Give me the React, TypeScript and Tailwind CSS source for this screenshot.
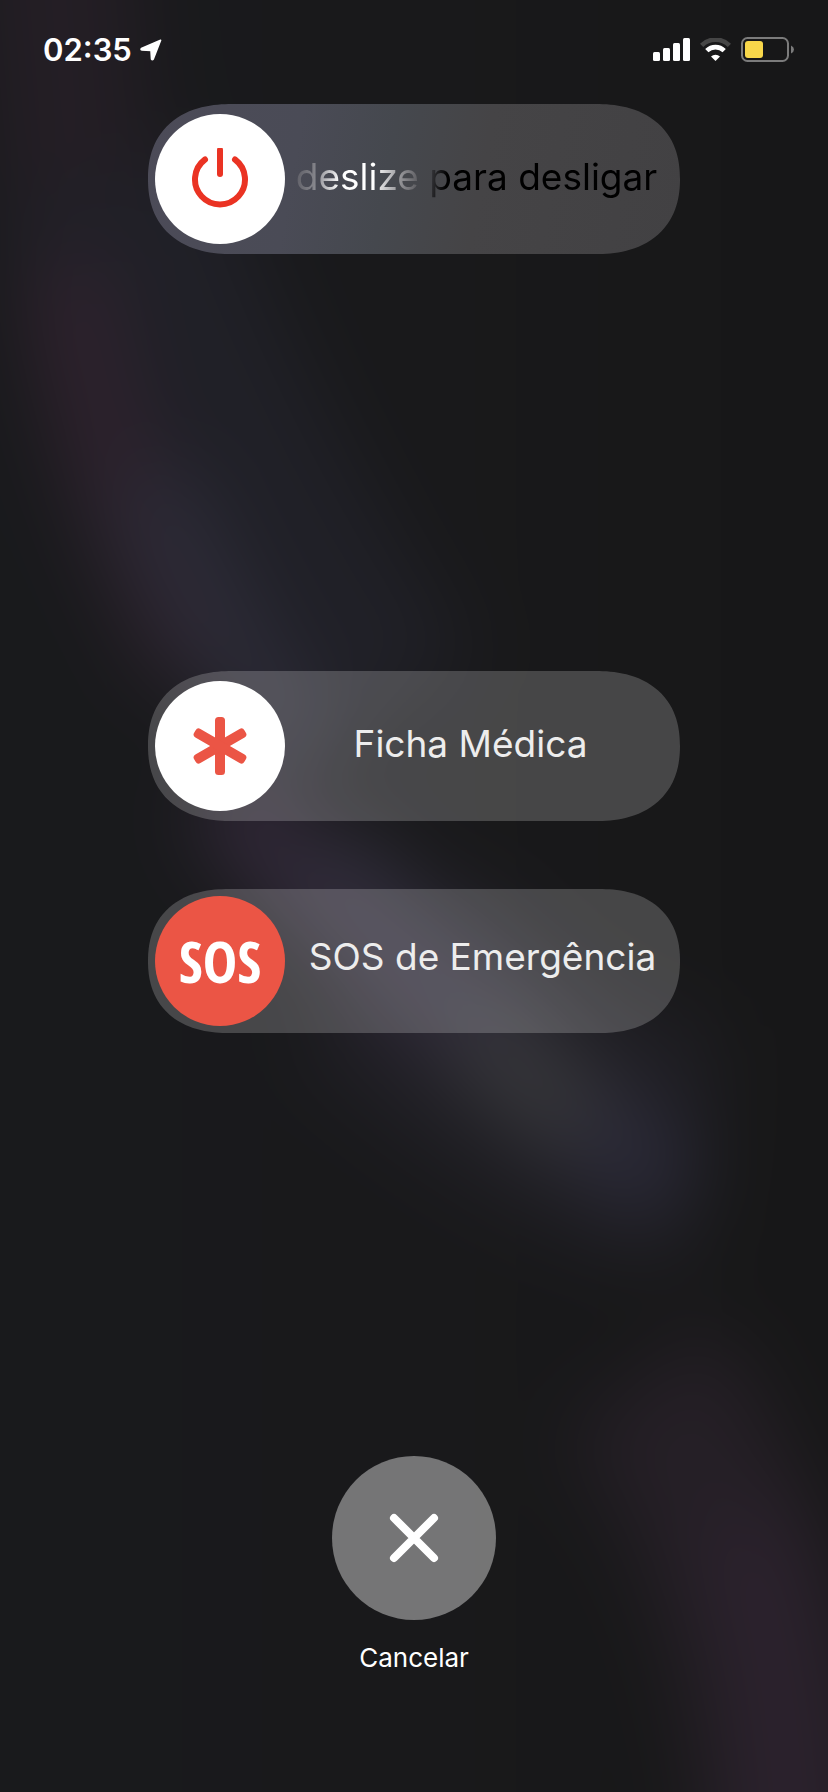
import React, { useId, useState } from 'react';
import clsx from 'clsx';

interface SlideControlProps {
  label: string;
  icon: React.ReactNode;
  trackClass: string;
  thumbClass: string;
  labelClass: string;
  textClass?: string;
}

function SlideControl({ label, icon, trackClass, thumbClass, labelClass, textClass }: SlideControlProps) {
  const id = useId();
  const [value, setValue] = useState(0);

  return (
    <div
      className={clsx(
        'relative w-full overflow-hidden rounded-full supports-[corner-shape:round]:rounded-[84px/75px] [corner-shape:superellipse(1.2)]',
        trackClass
      )}
    >
      <label
        htmlFor={id}
        className={clsx(
          'flex h-full items-center justify-center whitespace-nowrap pl-[137px] text-[37px] leading-[48px]',
          labelClass
        )}
      >
        <span className={clsx(textClass, value > 0 && 'opacity-30')}>{label}</span>
      </label>
      <input
        id={id}
        type="range"
        min={0}
        max={100}
        value={value}
        onChange={(e) => setValue(Number(e.target.value))}
        onPointerUp={() => setValue(0)}
        className={clsx(
          'absolute inset-0 m-0 h-full w-full cursor-pointer appearance-none bg-transparent px-[7px] outline-none [&::-webkit-slider-thumb]:size-[130px] [&::-webkit-slider-thumb]:appearance-none [&::-webkit-slider-thumb]:rounded-full',
          thumbClass
        )}
      />
      {/* Icon travels with the thumb */}
      <div
        className="pointer-events-none absolute inset-y-0 flex w-[130px] items-center justify-center"
        style={{ left: `calc(7px + (100% - 144px) * ${value / 100})` }}
      >
        {icon}
      </div>
    </div>
  );
}

function PowerIcon() {
  return (
    <svg width="58" height="62" viewBox="0 0 58 62" fill="none" stroke="#ea3323" strokeWidth="6" strokeLinecap="round">
      <path d="M29 2V26" />
      <path d="M14 11.5A25 25 0 1 0 44 11.5" />
    </svg>
  );
}

function MedicalIcon() {
  return (
    <svg width="60" height="60" viewBox="0 0 60 60" fill="#eb5545">
      <rect x="25" y="1" width="10" height="58" rx="3.5" />
      <rect x="25" y="1" width="10" height="58" rx="3.5" transform="rotate(60 30 30)" />
      <rect x="25" y="1" width="10" height="58" rx="3.5" transform="rotate(120 30 30)" />
    </svg>
  );
}

function StatusBar() {
  return (
    <header className="flex h-[104px] w-full items-start justify-between pl-[43px] pr-[34px] pt-[30px]">
      <div className="flex h-10 items-center gap-2 text-[31px] font-semibold leading-10 text-white">
        <time>02:35</time>
        <svg width="22" height="22" viewBox="0 0 22 22" fill="#fff" stroke="#fff" strokeWidth="1.6" strokeLinejoin="round">
          <path d="M20.6 1.2L1.4 9.6Q.6 10.4 1.6 10.9L11 11.4L11.5 20Q12.3 21.4 13.3 20Z" />
        </svg>
      </div>
      <div className="flex h-10 items-center gap-[10px]">
        <svg width="37" height="24" viewBox="0 0 37 24" fill="#fff">
          <rect x="0" y="14" width="7" height="9" rx="1.5" />
          <rect x="10" y="10" width="7" height="13" rx="1.5" />
          <rect x="20" y="5" width="7" height="18" rx="1.5" />
          <rect x="30" y="0" width="7" height="23" rx="1.5" />
        </svg>
        <svg width="31" height="24" viewBox="0 0 31 24" fill="none">
          <path d="M1.6 7.4A19.6 19.6 0 0 1 29.4 7.4" stroke="#464646" strokeWidth="4.6" />
          <path d="M6.8 12.7A12.3 12.3 0 0 1 24.2 12.7" stroke="#fff" strokeWidth="4.6" />
          <path d="M15.5 23L11 18.5A6.4 6.4 0 0 1 20 18.5Z" fill="#fff" />
        </svg>
        <svg width="53" height="26" viewBox="0 0 53 26" fill="none">
          <rect x="1" y="1" width="46" height="23" rx="5.5" stroke="#7b7b7b" strokeWidth="2" />
          <rect x="4" y="4" width="18" height="17" rx="3" fill="#f8d74a" />
          <path d="M50 8.5Q53 10 53 12.5T50 16.5Z" fill="#7b7b7b" />
        </svg>
      </div>
    </header>
  );
}

// Soft coloured light behind the controls
function Wallpaper() {
  return (
    <svg
      aria-hidden="true"
      className="absolute inset-0 -z-10 h-full w-full"
      viewBox="0 0 828 1792"
      preserveAspectRatio="none"
    >
      <defs>
        <linearGradient id="base" x1="0" y1="0" x2="1" y2="0">
          <stop offset="0" stopColor="#191a1d" />
          <stop offset="0.5" stopColor="#19191b" />
          <stop offset="1" stopColor="#161616" />
        </linearGradient>
        <filter
          id="soft"
          filterUnits="userSpaceOnUse"
          x="-200"
          y="-200"
          width="1228"
          height="2192"
          colorInterpolationFilters="sRGB"
        >
          <feGaussianBlur stdDeviation="40" />
        </filter>
      </defs>
      <g filter="url(#soft)" fill="none">
        <rect x="-200" y="-200" width="1228" height="2192" fill="url(#base)" />
        <path d="M50 -100L80 240" stroke="#241e25" strokeWidth="150" />
        <path d="M110 180Q200 460 380 720" stroke="#202027" strokeWidth="220" />
        <path d="M380 960Q560 1130 700 1150" stroke="#201f25" strokeWidth="240" />
        <path d="M64 260Q90 470 200 670" stroke="#2f222e" strokeWidth="84" />
        <path d="M150 480Q200 600 300 760" stroke="#2c2b37" strokeWidth="84" />
        <path d="M220 790Q350 950 500 1050" stroke="#33293a" strokeWidth="80" />
        <path d="M320 850Q420 970 530 1060" stroke="#302d3b" strokeWidth="90" />
        <path d="M470 1030Q560 1110 640 1160" stroke="#37373b" strokeWidth="84" />
        <path d="M590 1120L680 1190" stroke="#2b2a39" strokeWidth="84" />
        <path d="M640 1380Q780 1560 800 1900" stroke="#251f26" strokeWidth="180" />
        <path d="M740 1520Q790 1640 790 1900" stroke="#2c222e" strokeWidth="90" />
      </g>
    </svg>
  );
}

export default function App() {
  return (
    <div className="relative isolate flex min-h-screen flex-col items-center overflow-hidden bg-[#18181a] font-['Inter','Liberation_Sans',sans-serif]">
      <Wallpaper />
      <StatusBar />
      <main className="flex w-full max-w-[532px] flex-1 flex-col items-center justify-between pb-[118px]">
        <SlideControl
          label="deslize para desligar"
          icon={<PowerIcon />}
          trackClass="h-[150px] bg-[linear-gradient(100deg,#4c4b58_0%,#4a4b56_28%,#45484e_45%,#454446_62%,#424143_100%)]"
          thumbClass="[&::-webkit-slider-thumb]:bg-white"
          labelClass="pr-3 pb-1"
          textClass="bg-[linear-gradient(97deg,#5a5a62_0%,#85858b_6%,#ffffff_13%,#ffffff_22%,#a3a3a6_28%,#6a6a6e_33%,#3a3a3e_37%,#000000_42%)] bg-clip-text text-transparent"
        />

        <div className="flex w-full flex-col gap-[68px] pb-[6px]">
          <SlideControl
            label="Ficha Médica"
            icon={<MedicalIcon />}
            trackClass="h-[150px] bg-white/20"
            thumbClass="[&::-webkit-slider-thumb]:bg-white"
            labelClass="pr-6 pb-1 text-[#ededed]"
          />
          <SlideControl
            label="SOS de Emergência"
            icon={
              <span className="font-['Open_Sans_Condensed','Liberation_Sans_Narrow',sans-serif] text-[58px] font-bold leading-none text-white">
                SOS
              </span>
            }
            trackClass="h-36 bg-white/20"
            thumbClass="[&::-webkit-slider-thumb]:bg-[#eb5545]"
            labelClass="pb-2 text-[#ededed]"
          />
        </div>

        <button type="button" className="flex flex-col items-center gap-[22px] text-white">
          <span className="flex size-[164px] items-center justify-center rounded-full bg-white/40">
            <svg width="50" height="50" viewBox="0 0 50 50" fill="none" stroke="#fff" strokeWidth="8" strokeLinecap="round">
              <path d="M5 5L45 45M45 5L5 45" />
            </svg>
          </span>
          <span className="text-[26px] leading-8">Cancelar</span>
        </button>
      </main>
    </div>
  );
}
